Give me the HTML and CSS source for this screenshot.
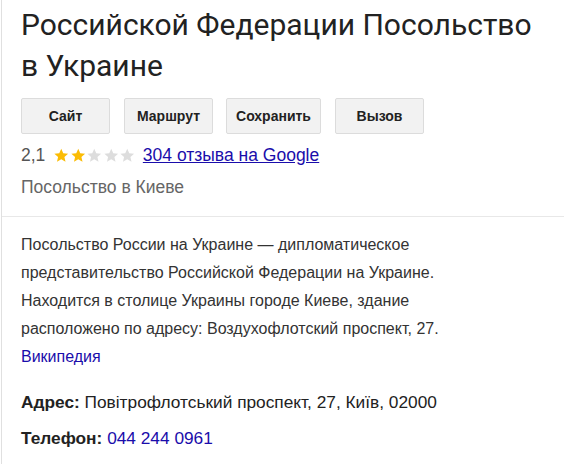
FILE: index.html
```html
<!DOCTYPE html>
<html lang="ru">
<head>
<meta charset="utf-8">
<link rel="stylesheet" href="styles.css">
</head>
<body>
<div class="panel">
  <div class="head">
    <h1 class="title">Российской Федерации Посольство в Украине</h1>
    <div class="actions">
      <button class="btn btn-site">Сайт</button>
      <button class="btn btn-route">Маршрут</button>
      <button class="btn btn-save">Сохранить</button>
      <button class="btn btn-call">Вызов</button>
    </div>
    <div class="rating">
      <span class="score">2,1</span>
      <span class="stars">
        <svg viewBox="0 0 24 24" class="star on"><path d="M12 2.5l2.9 6.6 7.1.6-5.4 4.7 1.6 7-6.2-3.7-6.2 3.7 1.6-7L2 9.7l7.1-.6z"/></svg>
        <svg viewBox="0 0 24 24" class="star on"><path d="M12 2.5l2.9 6.6 7.1.6-5.4 4.7 1.6 7-6.2-3.7-6.2 3.7 1.6-7L2 9.7l7.1-.6z"/></svg>
        <svg viewBox="0 0 24 24" class="star"><path d="M12 2.5l2.9 6.6 7.1.6-5.4 4.7 1.6 7-6.2-3.7-6.2 3.7 1.6-7L2 9.7l7.1-.6z"/></svg>
        <svg viewBox="0 0 24 24" class="star"><path d="M12 2.5l2.9 6.6 7.1.6-5.4 4.7 1.6 7-6.2-3.7-6.2 3.7 1.6-7L2 9.7l7.1-.6z"/></svg>
        <svg viewBox="0 0 24 24" class="star"><path d="M12 2.5l2.9 6.6 7.1.6-5.4 4.7 1.6 7-6.2-3.7-6.2 3.7 1.6-7L2 9.7l7.1-.6z"/></svg>
      </span>
      <a class="reviews" href="#">304 отзыва на Google</a>
    </div>
    <div class="category">Посольство в Киеве</div>
  </div>
  <div class="body">
    <p class="desc">Посольство России на Украине — дипломатическое представительство Российской Федерации на Украине. Находится в столице Украины городе Киеве, здание расположено по адресу: Воздухофлотский проспект, 27. <a class="wiki" href="#">Википедия</a></p>
    <div class="fact fact-addr"><b>Адрес:</b> Повітрофлотський проспект, 27, Київ, 02000</div>
    <div class="fact fact-phone"><b>Телефон:</b> <a class="phone" href="#">044 244 0961</a></div>
  </div>
</div>
</body>
</html>
```
FILE: styles.css
```css
html, body {
  margin: 0;
  padding: 0;
  background: #fff;
}
body {
  padding-left: 1px;
  font-family: "Liberation Sans", Arial, sans-serif;
  color: #222;
}
.panel {
  border-left: 1px solid #e0e0e0;
  min-height: 464px;
  box-sizing: border-box;
}
.head {
  padding: 4px 0 0 19px;
  border-bottom: 1px solid #e8e8e8;
  height: 217px;
  box-sizing: border-box;
}
.title {
  margin: 0;
  max-width: 530px;
  font-family: Roboto, "Open Sans", sans-serif;
  font-weight: 400;
  font-size: 30px;
  line-height: 41px;
  color: #222;
}
.actions {
  display: flex;
  margin-top: 12px;
}
.btn {
  height: 36px;
  width: 89px;
  background: #f2f2f2;
  border: 1px solid #dcdcdc;
  border-radius: 2px;
  font-family: "Liberation Sans", Arial, sans-serif;
  font-size: 14px;
  font-weight: 700;
  color: #222;
  padding: 0;
  margin-right: 14px;
}
.btn-route { margin-right: 13px; }
.btn-save { width: 95px; }
.rating {
  display: flex;
  align-items: center;
  margin-top: 7px;
  font-size: 17.5px;
  height: 28px;
}
.score { color: #555; }
.stars {
  display: flex;
  margin: 0 7px 0 8px;
}
.star {
  width: 16.5px;
  height: 16.5px;
  fill: #ddd;
}
.star.on { fill: #fbbc04; }
.reviews {
  color: #1a0dab;
  text-decoration: underline;
}
.category {
  margin-top: 4px;
  font-size: 17.5px;
  line-height: 28px;
  color: #666;
}
.body {
  padding: 14px 20px 0 19px;
}
.desc {
  margin: 0;
  max-width: 470px;
  font-size: 16px;
  line-height: 28px;
  color: #333;
}
.wiki, .phone {
  color: #1a0dab;
  text-decoration: none;
}
.desc .wiki { display: block; }
.fact {
  font-size: 17.3px;
  line-height: 24px;
  color: #222;
}
.fact-addr { margin-top: 19px; }
.fact-phone { margin-top: 12px; }
.fact b { color: #222; }
```
